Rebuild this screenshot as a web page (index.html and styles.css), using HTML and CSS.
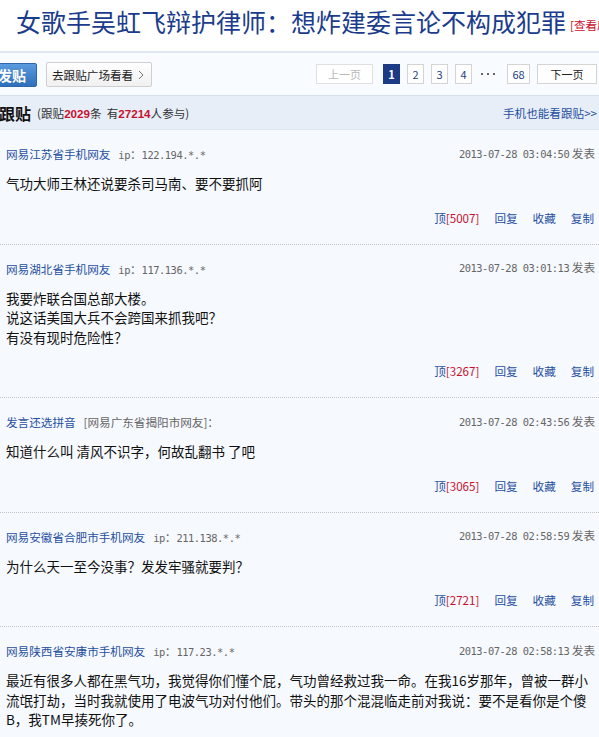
FILE: index.html
```html
<!DOCTYPE html>
<html lang="zh-CN">
<head>
<meta charset="utf-8">
<title>跟贴</title>
<link rel="stylesheet" href="styles.css">
</head>
<body>
<div class="page">
  <div class="headline">
    <h1 class="headline-title">女歌手吴虹飞辩护律师：想炸建委言论不构成犯罪</h1>
    <a class="headline-src" href="#">[查看原文]</a>
  </div>

  <div class="toolbar">
    <a class="btn-post" href="#">发贴</a>
    <a class="btn-square" href="#">去跟贴广场看看
      <svg class="chev" width="6" height="10" viewBox="0 0 6 10"><polyline points="1,1 5,5 1,9" fill="none" stroke="#777" stroke-width="1"/></svg>
    </a>
    <div class="pager">
      <span class="pg pg-wide pg-off">上一页</span>
      <span class="pg pg-cur">1</span>
      <a class="pg" href="#">2</a>
      <a class="pg" href="#">3</a>
      <a class="pg" href="#">4</a>
      <span class="pg-dots"><i></i><i></i><i></i></span>
      <a class="pg pg-68" href="#">68</a>
      <a class="pg pg-wide pg-next" href="#">下一页</a>
    </div>
  </div>

  <div class="list-head">
    <div class="list-title">跟贴 <span class="list-stat">(跟贴<b>2029</b>条 &nbsp;有<b>27214</b>人参与)</span></div>
    <a class="list-mobile" href="#">手机也能看跟贴&gt;&gt;</a>
  </div>

  <div class="posts">
    <div class="post">
      <div class="post-meta">
        <div class="who"><a class="user" href="#">网易江苏省手机网友</a><span class="ip">ip<span class="colon">：</span>122.194.*.*</span></div>
        <div class="time"><span class="mono">2013-07-28 03:04:50</span> 发表</div>
      </div>
      <div class="post-body">气功大师王林还说要杀司马南、要不要抓阿</div>
      <div class="post-acts"><a href="#">顶<em>[5007]</em></a><a href="#">回复</a><a href="#">收藏</a><a href="#">复制</a></div>
    </div>

    <div class="post">
      <div class="post-meta">
        <div class="who"><a class="user" href="#">网易湖北省手机网友</a><span class="ip">ip<span class="colon">：</span>117.136.*.*</span></div>
        <div class="time"><span class="mono">2013-07-28 03:01:13</span> 发表</div>
      </div>
      <div class="post-body">我要炸联合国总部大楼。<br>说这话美国大兵不会跨国来抓我吧？<br>有没有现时危险性？</div>
      <div class="post-acts"><a href="#">顶<em>[3267]</em></a><a href="#">回复</a><a href="#">收藏</a><a href="#">复制</a></div>
    </div>

    <div class="post">
      <div class="post-meta">
        <div class="who"><a class="user" href="#">发言还选拼音</a><span class="from">[网易广东省揭阳市网友]：</span></div>
        <div class="time"><span class="mono">2013-07-28 02:43:56</span> 发表</div>
      </div>
      <div class="post-body">知道什么叫 清风不识字，何故乱翻书 了吧</div>
      <div class="post-acts"><a href="#">顶<em>[3065]</em></a><a href="#">回复</a><a href="#">收藏</a><a href="#">复制</a></div>
    </div>

    <div class="post">
      <div class="post-meta">
        <div class="who"><a class="user" href="#">网易安徽省合肥市手机网友</a><span class="ip">ip<span class="colon">：</span>211.138.*.*</span></div>
        <div class="time"><span class="mono">2013-07-28 02:58:59</span> 发表</div>
      </div>
      <div class="post-body">为什么天一至今没事？发发牢骚就要判？</div>
      <div class="post-acts"><a href="#">顶<em>[2721]</em></a><a href="#">回复</a><a href="#">收藏</a><a href="#">复制</a></div>
    </div>

    <div class="post">
      <div class="post-meta">
        <div class="who"><a class="user" href="#">网易陕西省安康市手机网友</a><span class="ip">ip<span class="colon">：</span>117.23.*.*</span></div>
        <div class="time"><span class="mono">2013-07-28 02:58:13</span> 发表</div>
      </div>
      <div class="post-body">最近有很多人都在黑气功，我觉得你们懂个屁，气功曾经救过我一命。在我16岁那年，曾被一群小流氓打劫，当时我就使用了电波气功对付他们。带头的那个混混临走前对我说：要不是看你是个傻B，我TM早揍死你了。</div>
      <div class="post-acts"><a href="#">顶<em>[1988]</em></a><a href="#">回复</a><a href="#">收藏</a><a href="#">复制</a></div>
    </div>
  </div>
</div>
</body>
</html>
```

FILE: styles.css
```css
html, body {
  margin: 0;
  padding: 0;
  background: #ffffff;
}

body {
  font-family: "Noto Sans CJK SC", "Liberation Sans", sans-serif;
  font-size: 11.6px;
  color: #333;
  overflow: hidden;
}

a {
  text-decoration: none;
}

.page {
  width: 599px;
  overflow: hidden;
}

/* article headline */
.headline {
  height: 51px;
  display: flex;
  align-items: flex-start;
  white-space: nowrap;
  padding-left: 16px;
}

.headline-title {
  margin: 0;
  font-weight: normal;
  font-size: 25px;
  line-height: 42px;
  color: #1b3c8c;
  flex: none;
}

.headline-src {
  flex: none;
  margin-left: 4px;
  margin-top: 17px;
  font-size: 11.6px;
  line-height: 16px;
  color: #c8102e;
}

/* toolbar with post button and pager */
.toolbar {
  border-top: 2px solid #dfe7f3;
  height: 42px;
  background: #f8fbff;
  display: flex;
  align-items: center;
  padding-right: 2px;
}

.btn-post {
  flex: none;
  margin-left: -17px;
  margin-top: 2px;
  height: 24px;
  line-height: 22px;
  padding: 0 10px 0 14px;
  border-radius: 2px;
  background: linear-gradient(#5a9ade, #2f6fbb);
  border: 1px solid #2d66ad;
  color: #fff;
  font-size: 14px;
  font-weight: bold;
  box-sizing: border-box;
}

.btn-square {
  flex: none;
  margin-left: 9px;
  margin-top: 1px;
  height: 25px;
  box-sizing: border-box;
  display: flex;
  align-items: center;
  gap: 5px;
  padding: 0 7px 0 5px;
  border: 1px solid #cfcfcf;
  border-radius: 2px;
  background: linear-gradient(#ffffff, #f0f0f0);
  color: #222;
  font-size: 11.6px;
}

.pager {
  margin-left: auto;
  display: flex;
  align-items: center;
  gap: 7px;
}

.pg {
  box-sizing: border-box;
  height: 20px;
  min-width: 17px;
  padding: 0 4px;
  border: 1px solid #d4d4d4;
  background: #fff;
  color: #1d3e82;
  font-size: 11px;
  line-height: 18px;
  text-align: center;
}

.pg-wide {
  width: 57px;
}

.pg-off {
  color: #b8b8b8;
  border-color: #e0e0e0;
  margin-right: 3px;
}

.pg-cur {
  background: #1c3b85;
  border-color: #1c3b85;
  color: #fff;
  font-weight: bold;
}

.pg-68 {
  width: 23px;
}

.pg-next {
  width: 60px;
  color: #222;
}

/* ellipsis between page numbers: three small dots */
.pg-dots {
  width: 16px;
  margin: 0 4px 0 1px;
  display: flex;
  justify-content: space-between;
  align-items: center;
  padding: 0 1px;
  box-sizing: border-box;
}

.pg-dots i {
  width: 2px;
  height: 2px;
  background: #666;
}

/* list heading */
.list-head {
  border-top: 1px solid #d5dfee;
  border-bottom: 1px solid #dde5f1;
  height: 33px;
  background: #e7eef8;
  display: flex;
  align-items: center;
  justify-content: space-between;
  padding-right: 2px;
}

.list-title {
  margin-left: -1px;
  font-size: 16px;
  font-weight: bold;
  color: #111;
  display: flex;
  align-items: center;
  gap: 6px;
}

.list-stat {
  font-size: 11.6px;
  font-weight: normal;
  color: #333;
}

.list-stat b {
  color: #c8102e;
  font-family: "Liberation Sans", sans-serif;
  font-weight: bold;
}

.list-mobile {
  color: #1f4f9f;
  font-size: 11.6px;
}

/* posts */
.posts {
  background: #f6f9fe;
}

.post {
  padding: 15px 4px 17px 6px;
  border-bottom: 1px dotted #c4c4c4;
}

.post-meta {
  height: 18px;
  display: flex;
  align-items: center;
  justify-content: space-between;
  white-space: nowrap;
}

.who {
  display: flex;
  align-items: center;
  gap: 8px;
}

.user {
  color: #1f4f9f;
}

.ip,
.mono {
  font-family: "DejaVu Sans Mono", monospace;
  font-size: 10.4px;
  letter-spacing: -0.45px;
  color: #666;
}

.colon {
  font-family: "Noto Sans CJK SC", sans-serif;
  font-size: 11.6px;
  letter-spacing: 0;
}

.from {
  color: #666;
}

.time {
  color: #666;
  margin-top: -3px;
}

.post-body {
  margin-top: 11px;
  font-size: 13.5px;
  line-height: 19.5px;
  color: #111;
}

.post-acts {
  margin-top: 15px;
  height: 18px;
  display: flex;
  justify-content: flex-end;
  align-items: center;
  gap: 15px;
  padding-right: 1px;
}

.post-acts a {
  color: #1f4f9f;
}

.post-acts em {
  font-style: normal;
  color: #c8102e;
}
```
